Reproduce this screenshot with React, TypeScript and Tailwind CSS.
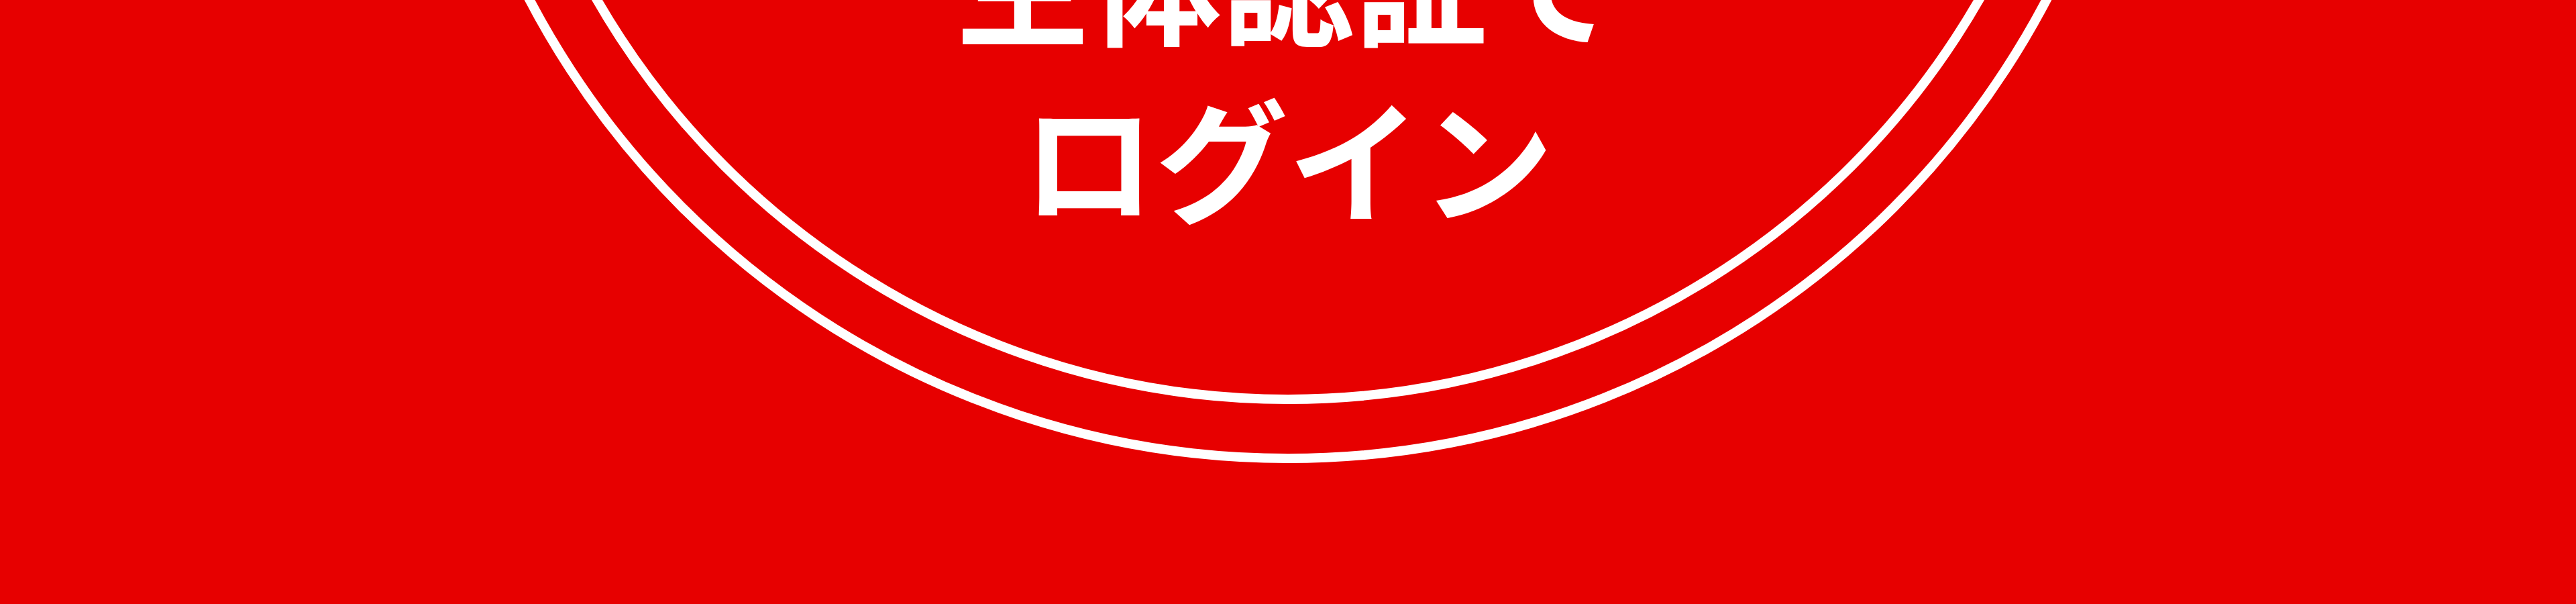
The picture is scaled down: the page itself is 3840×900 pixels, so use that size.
export default function App() {
  return (
    <div className="w-[3840px] h-[900px] overflow-hidden bg-[#e70000] flex items-end justify-center pb-[210px]">
      {/* 外側の円 */}
      <div className="shrink-0 w-[2568px] h-[2568px] rounded-full border-[14px] border-white flex items-end justify-center pb-[74px]">
        {/* 内側の円 */}
        <div className="shrink-0 w-[2392px] h-[2392px] rounded-full border-[14px] border-white flex items-end justify-center pb-[225px]">
          <p
            className="text-white font-bold text-center text-[198px] leading-[264px]"
            style={{ fontFamily: '"Noto Sans CJK JP", "Noto Sans", sans-serif' }}
          >
            生体認証で
            <br />
            ログイン
          </p>
        </div>
      </div>
    </div>
  );
}
